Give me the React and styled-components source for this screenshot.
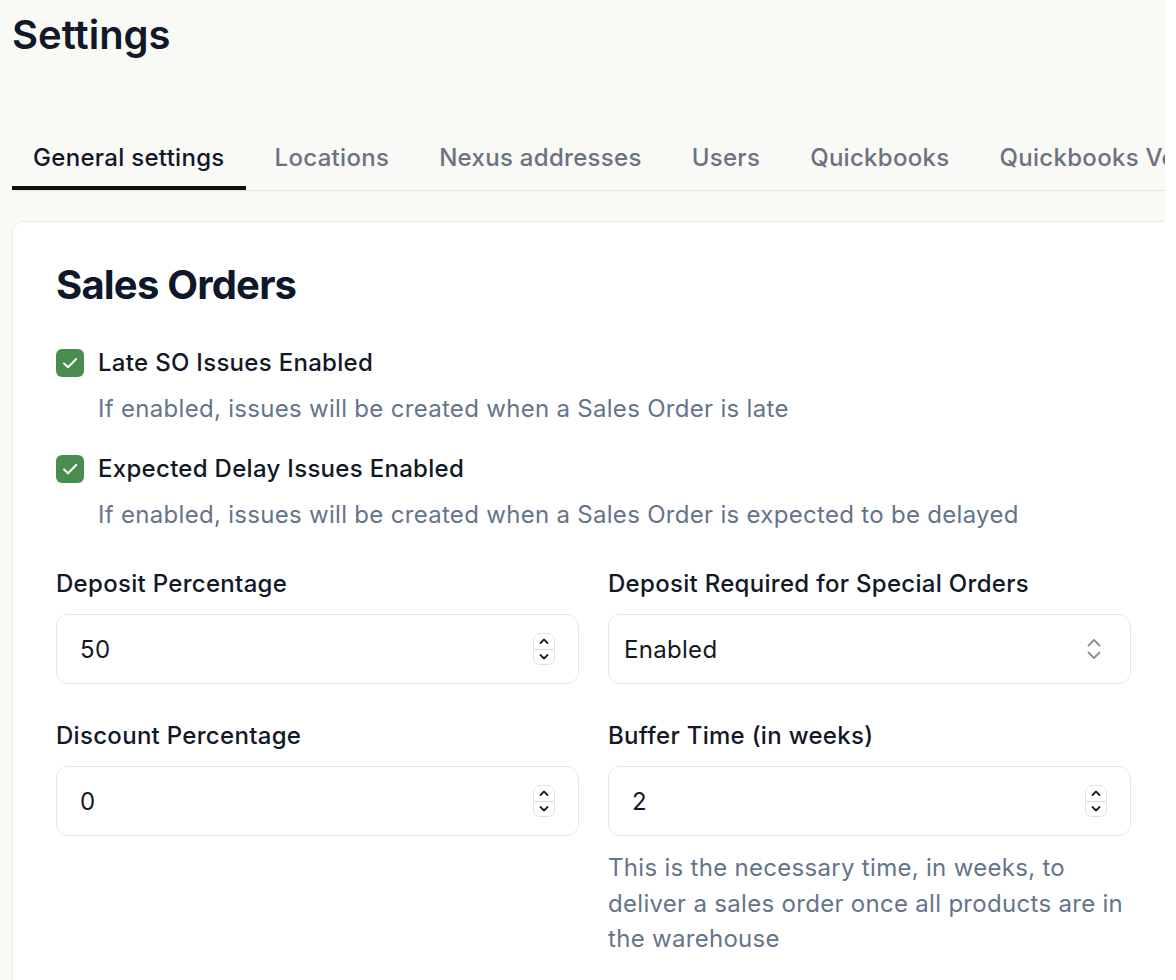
import styled, { createGlobalStyle } from "styled-components"

const GlobalStyle = createGlobalStyle`
  html, body {
    margin: 0;
    padding: 0;
    background: #ffffff;
  }
  * {
    box-sizing: border-box;
  }
  input::-webkit-outer-spin-button,
  input::-webkit-inner-spin-button {
    -webkit-appearance: none;
    margin: 0;
  }
`

const Frame = styled.div`
  width: 1165px;
  height: 980px;
  overflow: hidden;
  background: #f9f9f6;
  font-family: Inter, "Noto Sans", sans-serif;
  color: #111827;
  letter-spacing: 0.3px;
`
const Page = styled.div`
  width: 1190px;
  padding: 11px 0 0 12px;
`
const Title = styled.h1`
  margin: 0;
  font-size: 40px;
  line-height: 48px;
  font-weight: 600;
  letter-spacing: 0;
  color: #111827;
`
const TabList = styled.div`
  display: flex;
  gap: 8px;
  margin-top: 71px;
  border-bottom: 1px solid #e7e7e2;
  width: 1153px;
`
const Tab = styled.div`
  padding: 12px 21px;
  font-size: 24px;
  line-height: 32px;
  font-weight: 500;
  white-space: nowrap;
  color: ${(props) => (props.active ? "#111827" : "#6b7280")};
  border-bottom: 4px solid ${(props) => (props.active ? "#111111" : "transparent")};
`
const Card = styled.div`
  margin-top: 30px;
  background: #ffffff;
  border: 1px solid #ebebe6;
  border-radius: 12px;
  padding: 39px 44px 40px 43px;
  width: 1174px;
`
const CardTitle = styled.h2`
  margin: 0;
  font-size: 40px;
  line-height: 48px;
  font-weight: 700;
  letter-spacing: -0.8px;
  color: #0f172a;
`
const Options = styled.div`
  margin-top: 38px;
  display: flex;
  flex-direction: column;
  gap: 28px;
`
const Option = styled.div`
  display: flex;
  flex-direction: column;
  gap: 14px;
`
const OptionRow = styled.label`
  display: flex;
  align-items: center;
  gap: 14px;
  font-size: 24px;
  line-height: 32px;
  font-weight: 500;
  color: #111827;
`
const Box = styled.span`
  width: 28px;
  height: 28px;
  border-radius: 6px;
  background: #4a8b4f;
  display: flex;
  align-items: center;
  justify-content: center;
`
const Hint = styled.div`
  padding-left: ${(props) => props.indent || 0}px;
  margin-top: ${(props) => props.top || 0}px;
  font-size: 24px;
  line-height: ${(props) => props.lh || 35.5}px;
  color: #64748b;
`
const Grid = styled.div`
  margin-top: 37px;
  display: grid;
  grid-template-columns: 523px 523px;
  column-gap: 29px;
  row-gap: 36px;
`
const Field = styled.div`
  display: flex;
  flex-direction: column;
`
const Label = styled.div`
  font-size: 24px;
  line-height: 32px;
  font-weight: 500;
  color: #111827;
  margin-bottom: 14px;
`
const InputBox = styled.div`
  height: 70px;
  border: 1px solid #e8e8e3;
  border-radius: 12px;
  background: #ffffff;
  display: flex;
  align-items: center;
  padding: 0 ${(props) => props.right || 23}px 0 ${(props) => props.left || 23}px;
`
const Value = styled.input`
  flex: 1;
  border: none;
  outline: none;
  background: transparent;
  font-family: inherit;
  font-size: 24px;
  letter-spacing: 0.3px;
  color: #111827;
  padding: 0;
  min-width: 0;
`
const SelectValue = styled.span`
  flex: 1;
  font-size: 24px;
  color: #111827;
`
const Spinner = styled.div`
  width: 22px;
  height: 32px;
  border: 1px solid #e4e4e4;
  border-radius: 7px;
  display: flex;
  flex-direction: column;
  overflow: hidden;
`
const SpinHalf = styled.div`
  flex: 1;
  display: flex;
  align-items: center;
  justify-content: center;
  border-top: ${(props) => (props.bottom ? "1px solid #d9d9d9" : "none")};
`

const Check = () => (
  <svg width="20" height="20" viewBox="0 0 20 20" fill="none">
    <path d="M4 10.4l4 3.9L16.2 6" stroke="#fff" strokeWidth="2" strokeLinecap="round" strokeLinejoin="round" />
  </svg>
)

const NumberSpinner = () => (
  <Spinner>
    <SpinHalf>
      <svg width="12" height="8" viewBox="0 0 12 8" fill="none">
        <path d="M2.5 6L6 2.5 9.5 6" stroke="#222" strokeWidth="1.8" strokeLinecap="round" strokeLinejoin="round" />
      </svg>
    </SpinHalf>
    <SpinHalf bottom>
      <svg width="12" height="8" viewBox="0 0 12 8" fill="none">
        <path d="M2.5 2L6 5.5 9.5 2" stroke="#222" strokeWidth="1.8" strokeLinecap="round" strokeLinejoin="round" />
      </svg>
    </SpinHalf>
  </Spinner>
)

const UpDown = () => (
  <svg width="18" height="24" viewBox="0 0 18 24" fill="none">
    <path d="M3.5 8.5L9 3l5.5 5.5M3.5 15.5L9 21l5.5-5.5" stroke="#8a8f98" strokeWidth="1.8" strokeLinecap="round" strokeLinejoin="round" />
  </svg>
)

const NumberField = ({ label, value, children }) => (
  <Field>
    <Label>{label}</Label>
    <InputBox>
      <Value type="number" defaultValue={value} />
      <NumberSpinner />
    </InputBox>
    {children}
  </Field>
)

const tabs = ["General settings", "Locations", "Nexus addresses", "Users", "Quickbooks", "Quickbooks Vendors"]

const App = () => {
  return (
    <Frame>
      <GlobalStyle />
      <Page>
        <Title>Settings</Title>
        <TabList>
          {tabs.map((t, i) => (
            <Tab key={t} active={i === 0}>{t}</Tab>
          ))}
        </TabList>
        <Card>
          <CardTitle>Sales Orders</CardTitle>
          <Options>
            <Option>
              <OptionRow>
                <Box><Check /></Box>
                Late SO Issues Enabled
              </OptionRow>
              <Hint indent={42} lh={32}>If enabled, issues will be created when a Sales Order is late</Hint>
            </Option>
            <Option>
              <OptionRow>
                <Box><Check /></Box>
                Expected Delay Issues Enabled
              </OptionRow>
              <Hint indent={42} lh={32}>If enabled, issues will be created when a Sales Order is expected to be delayed</Hint>
            </Option>
          </Options>
          <Grid>
            <NumberField label="Deposit Percentage" value={50} />
            <Field>
              <Label>Deposit Required for Special Orders</Label>
              <InputBox left={15} right={27}>
                <SelectValue>Enabled</SelectValue>
                <UpDown />
              </InputBox>
            </Field>
            <NumberField label="Discount Percentage" value={0} />
            <NumberField label="Buffer Time (in weeks)" value={2}>
              <Hint top={14}>
                This is the necessary time, in weeks, to deliver a sales order once all products are in the warehouse
              </Hint>
            </NumberField>
          </Grid>
        </Card>
      </Page>
    </Frame>
  )
}

export default App
